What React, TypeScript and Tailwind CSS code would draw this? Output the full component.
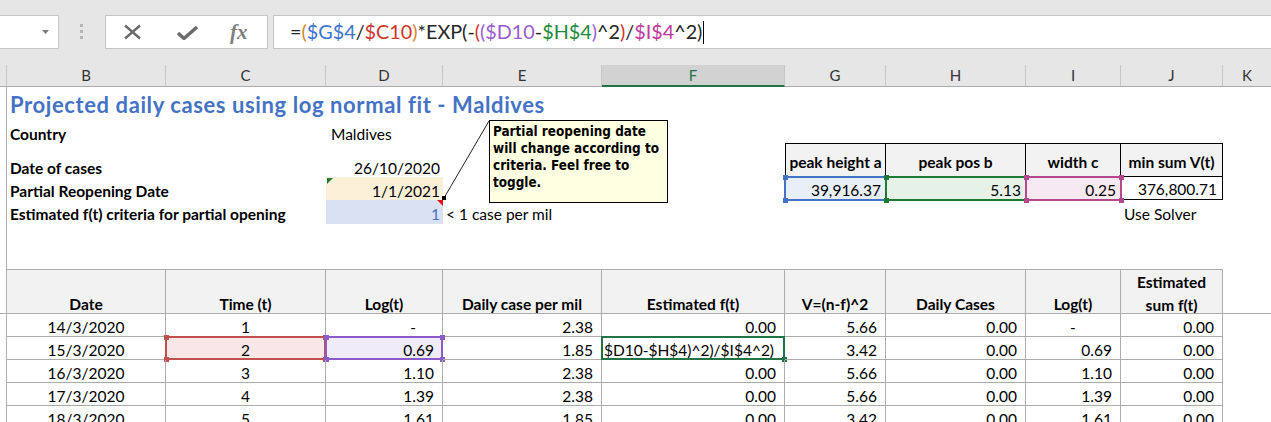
import React from "react";

const COL = ["", "col-start-1", "col-start-2", "col-start-3", "col-start-4", "col-start-5", "col-start-6", "col-start-7", "col-start-8", "col-start-9", "col-start-10", "col-start-11"];
const ROW = ["", "row-start-1", "row-start-2", "row-start-3", "row-start-4", "row-start-5", "row-start-6", "row-start-7", "row-start-8", "row-start-9", "row-start-10", "row-start-11", "row-start-12", "row-start-13", "row-start-14"];

const GRID_COLS = "grid-cols-[7px_159px_160px_117px_159px_183px_101px_140px_95px_102px_48px]";

const formula: [string, string][] = [
  ["=", "text-[#262626]"],
  ["(", "text-[#d6862b]"],
  ["$G$4", "text-[#3b73cf]"],
  ["/", "text-[#262626]"],
  ["$C10", "text-[#d0342c]"],
  [")", "text-[#d6862b]"],
  ["*EXP(-", "text-[#262626]"],
  ["(", "text-[#d0342c]"],
  ["(", "text-[#9a5bd1]"],
  ["$D10", "text-[#9a5bd1]"],
  ["-", "text-[#262626]"],
  ["$H$4", "text-[#1e8a3c]"],
  [")", "text-[#9a5bd1]"],
  ["^2", "text-[#262626]"],
  [")", "text-[#d0342c]"],
  ["/", "text-[#262626]"],
  ["$I$4", "text-[#c0399d]"],
  ["^2)", "text-[#262626]"],
];

const headers = ["", "B", "C", "D", "E", "F", "G", "H", "I", "J", "K"];

const data = [
  ["14/3/2020", "1", "-", "2.38", "0.00", "5.66", "0.00", "-", "0.00"],
  ["15/3/2020", "2", "0.69", "1.85", "", "3.42", "0.00", "0.69", "0.00"],
  ["16/3/2020", "3", "1.10", "2.38", "0.00", "5.66", "0.00", "1.10", "0.00"],
  ["17/3/2020", "4", "1.39", "2.38", "0.00", "5.66", "0.00", "1.39", "0.00"],
  ["18/3/2020", "5", "1.61", "1.85", "0.00", "3.42", "0.00", "1.61", "0.00"],
];

function Sel({ border, square, all = true }: { border: string; square: string; all?: boolean }) {
  return (
    <div className={`absolute -inset-[1px] border-2 pointer-events-none ${border}`}>
      {all && <span className={`absolute w-[5px] h-[5px] -left-[3.5px] -top-[3.5px] ${square}`} />}
      {all && <span className={`absolute w-[5px] h-[5px] -right-[3.5px] -top-[3.5px] ${square}`} />}
      {all && <span className={`absolute w-[5px] h-[5px] -left-[3.5px] -bottom-[3.5px] ${square}`} />}
      <span className={`absolute w-[5px] h-[5px] -right-[3.5px] -bottom-[3.5px] ${square}`} />
    </div>
  );
}

function FormulaBar() {
  return (
    <div className="h-[62px] bg-[#e6e6e6] flex items-start pt-[15px]">
      <div className="w-[59px] h-[34px] bg-white border border-l-0 border-[#c6c6c6] flex items-center justify-end pr-[9px]">
        <svg width="7" height="4" viewBox="0 0 7 4">
          <path d="M0 0 L7 0 L3.5 4 Z" fill="#7a7a7a" />
        </svg>
      </div>
      <div className="ml-[21px] mt-[9px] flex flex-col gap-[3px]">
        <span className="w-[3px] h-[3px] bg-[#b4b4b4]" />
        <span className="w-[3px] h-[3px] bg-[#b4b4b4]" />
        <span className="w-[3px] h-[3px] bg-[#b4b4b4]" />
      </div>
      <div className="ml-[22px] w-[163px] h-[34px] bg-white border border-[#c6c6c6] flex items-center">
        <svg className="ml-[17px]" width="19" height="16" viewBox="0 0 19 16">
          <path d="M2 1.5 L17 14.5 M17 1.5 L2 14.5" stroke="#6b6b6b" strokeWidth="2.4" fill="none" />
        </svg>
        <svg className="ml-[35px] mt-[2px]" width="21" height="14" viewBox="0 0 21 14">
          <path d="M1 7 L7 12.5 L20 1" stroke="#6b6b6b" strokeWidth="3.4" fill="none" />
        </svg>
        <span className="ml-[32px] font-['Liberation_Serif',serif] italic font-bold text-[21px] text-[#7f7f7f] leading-none">
          fx
        </span>
      </div>
      <div className="ml-[5px] flex-1 h-[34px] bg-white border border-r-0 border-[#c6c6c6] flex items-center pl-[16px] text-[19.8px] whitespace-nowrap">
        {formula.map(([t, c], i) => (
          <span key={i} className={c}>
            {t}
          </span>
        ))}
        <span className="ml-[1px] w-[1px] h-[23px] bg-black" />
      </div>
    </div>
  );
}

function ColumnHeaders() {
  return (
    <div className={`grid ${GRID_COLS} h-[25px] bg-[#e6e6e6] text-[15px]`}>
      {headers.map((h, i) => (
        <div
          key={i}
          className={
            h === "F"
              ? "mt-[3px] h-[22px] flex items-center justify-center border-r border-[#c6c6c6] bg-[#d2d2d2] text-[#217346] border-b-2 border-b-[#217346]"
              : h === "K"
              ? "mt-[3px] h-[22px] flex items-center justify-center border-b border-b-[#ababab] text-[#333]"
              : "mt-[3px] h-[22px] flex items-center justify-center border-r border-[#c6c6c6] border-b border-b-[#ababab] text-[#333]"
          }
        >
          {h}
        </div>
      ))}
    </div>
  );
}

const tableHeaders = ["Date", "Time (t)", "Log(t)", "Daily case per mil", "Estimated f(t)", "V=(n-f)^2", "Daily Cases", "Log(t)"];

export default function App() {
  return (
    <div className="w-[1271px] h-[422px] overflow-hidden bg-white font-['Lato',sans-serif] text-[15.5px] text-black">
      <FormulaBar />
      <ColumnHeaders />
      <div
        className={`relative grid ${GRID_COLS} grid-rows-[34px_22px_11px_23px_23px_24px_23px_22px_45px_23px_23px_23px_23px_23px] leading-[18px]`}
      >
        <div className="col-start-1 row-start-1 row-span-full border-r border-[#b0b0b0]" />

        {/* title + inputs */}
        <div className="col-start-2 col-span-6 row-start-1 flex items-center pl-[3px] pt-[1px] font-bold text-[22px] tracking-[0.6px] text-[#4472c4] whitespace-nowrap">
          Projected daily cases using log normal fit - Maldives
        </div>
        <div className="col-start-2 col-span-2 row-start-2 flex items-end pl-[3px] font-bold">Country</div>
        <div className="col-start-4 row-start-2 flex items-end pl-[5px]">Maldives</div>

        <div className="col-start-2 col-span-2 row-start-4 flex items-end pl-[3px] font-bold">Date of cases</div>
        <div className="col-start-4 row-start-4 flex items-end justify-end pr-[3px]">26/10/2020</div>

        <div className="col-start-2 col-span-2 row-start-5 flex items-end pl-[3px] font-bold">Partial Reopening Date</div>
        <div className="relative col-start-4 row-start-5 flex items-end justify-end pr-[3px] bg-[#fcefd7]">
          1/1/2021
          <span className="absolute left-[1px] top-[1px] w-0 h-0 border-t-[6px] border-t-[#1e7a34] border-r-[6px] border-r-transparent" />
        </div>

        <div className="col-start-2 col-span-2 row-start-6 flex items-end pb-[1px] pl-[3px] font-bold whitespace-nowrap">
          Estimated f(t) criteria for partial opening
        </div>
        <div className="relative col-start-4 row-start-6 flex items-end pb-[1px] justify-end pr-[3px] bg-[#d9e1f2] text-[#4472c4]">
          1
          <span className="absolute right-0 top-0 w-0 h-0 border-t-[6px] border-t-[#e8100e] border-l-[6px] border-l-transparent" />
        </div>
        <div className="col-start-5 row-start-6 flex items-end pb-[1px] pl-[3px] whitespace-nowrap">&lt; 1 case per mil</div>
        <div className="col-start-10 row-start-6 flex items-end pb-[1px] pl-[3px] whitespace-nowrap">Use Solver</div>

        {/* parameter table */}
        <div className="col-start-7 row-start-3 row-span-2 flex items-center justify-center pt-[4px] bg-[#f2f2f2] border border-black font-bold whitespace-nowrap">
          peak height a
        </div>
        <div className="col-start-8 row-start-3 row-span-2 flex items-center justify-center pt-[4px] bg-[#f2f2f2] border-t border-r border-b border-black font-bold">
          peak pos b
        </div>
        <div className="col-start-9 row-start-3 row-span-2 flex items-center justify-center pt-[4px] bg-[#f2f2f2] border-t border-r border-b border-black font-bold">
          width c
        </div>
        <div className="col-start-10 row-start-3 row-span-2 flex items-center justify-center pt-[4px] bg-[#f2f2f2] border-t border-r border-b border-black font-bold whitespace-nowrap">
          min sum V(t)
        </div>
        <div className="relative col-start-7 row-start-5 flex items-center pt-[2px] justify-end pr-[5px] bg-[#e9eff9]">
          39,916.37
          <Sel border="border-[#4472c4]" square="bg-[#4472c4]" />
        </div>
        <div className="relative col-start-8 row-start-5 flex items-center pt-[2px] justify-end pr-[5px] bg-[#e6f1e7]">
          5.13
          <Sel border="border-[#1e7a34]" square="bg-[#1e7a34]" />
        </div>
        <div className="relative col-start-9 row-start-5 flex items-center pt-[2px] justify-end pr-[5px] bg-[#f7e9f2]">
          0.25
          <Sel border="border-[#b4478e]" square="bg-[#b4478e]" />
        </div>
        <div className="col-start-10 row-start-5 flex items-center pt-[2px] justify-end pr-[5px] border-r border-b border-black">
          376,800.71
        </div>

        {/* data table header */}
        <div className="col-start-1 row-start-9 border-b border-[#ababab]" />
        {tableHeaders.map((h, i) => (
          <div
            key={h + i}
            className={`${COL[i + 2]} row-start-9 flex items-end justify-center bg-[#f2f2f2] border-t border-r border-b border-[#ababab] font-bold whitespace-nowrap`}
          >
            {h}
          </div>
        ))}
        <div className="col-start-10 row-start-9 flex items-end justify-center text-center bg-[#f2f2f2] border-t border-r border-b border-[#ababab] font-bold">
          <span className="leading-[23px] mb-[-4px]">
            Estimated
            <br />
            sum f(t)
          </span>
        </div>
        <div className="col-start-11 row-start-9 border-b border-[#ababab]" />

        {/* data rows */}
        {data.map((r, ri) =>
          r.map((v, ci) => {
            const row = ROW[ri + 10];
            const col = COL[ci + 2];
            const align =
              ci < 2 ? "justify-center" : v === "-" && ci === 7 ? "justify-center" : v === "-" ? "justify-end pr-[26px]" : "justify-end pr-[8px]";
            if (ri === 1 && ci === 4) {
              return (
                <div key={`${ri}-${ci}`} className={`relative ${col} ${row} flex items-end pl-[2px] border-r border-b border-[#ababab] whitespace-nowrap`}>
                  $D10-$H$4)^2)/$I$4^2)
                  <Sel border="border-[#217346]" square="bg-[#217346]" all={false} />
                </div>
              );
            }
            const hl =
              ri === 1 && ci === 1
                ? "bg-[#f9e7e7]"
                : ri === 1 && ci === 2
                ? "bg-[#f0ebf8]"
                : "";
            return (
              <div key={`${ri}-${ci}`} className={`relative ${col} ${row} flex items-end ${align} ${hl} border-r border-b border-[#ababab]`}>
                {v}
                {ri === 1 && ci === 1 && <Sel border="border-[#c0504d]" square="bg-[#c0504d]" />}
                {ri === 1 && ci === 2 && <Sel border="border-[#8a5cc9]" square="bg-[#8a5cc9]" />}
              </div>
            );
          })
        )}

        {/* comment */}
        <svg className="absolute left-0 top-0 pointer-events-none" width="1271" height="200">
          <line x1="489" y1="34" x2="444" y2="111" stroke="#222" strokeWidth="1" />
          <rect x="442" y="109" width="4" height="4" fill="#000" />
        </svg>
        <div className="absolute left-[489px] top-[33px] w-[179px] h-[83px] bg-[#ffffe1] border border-black pl-[3px] pt-[2px] font-['DejaVu_Sans_Condensed','Liberation_Sans',sans-serif] font-bold text-[13.4px] leading-[17px] text-black whitespace-nowrap">
          Partial reopening date
          <br />
          will change according to
          <br />
          criteria. Feel free to
          <br />
          toggle.
        </div>
      </div>
    </div>
  );
}
